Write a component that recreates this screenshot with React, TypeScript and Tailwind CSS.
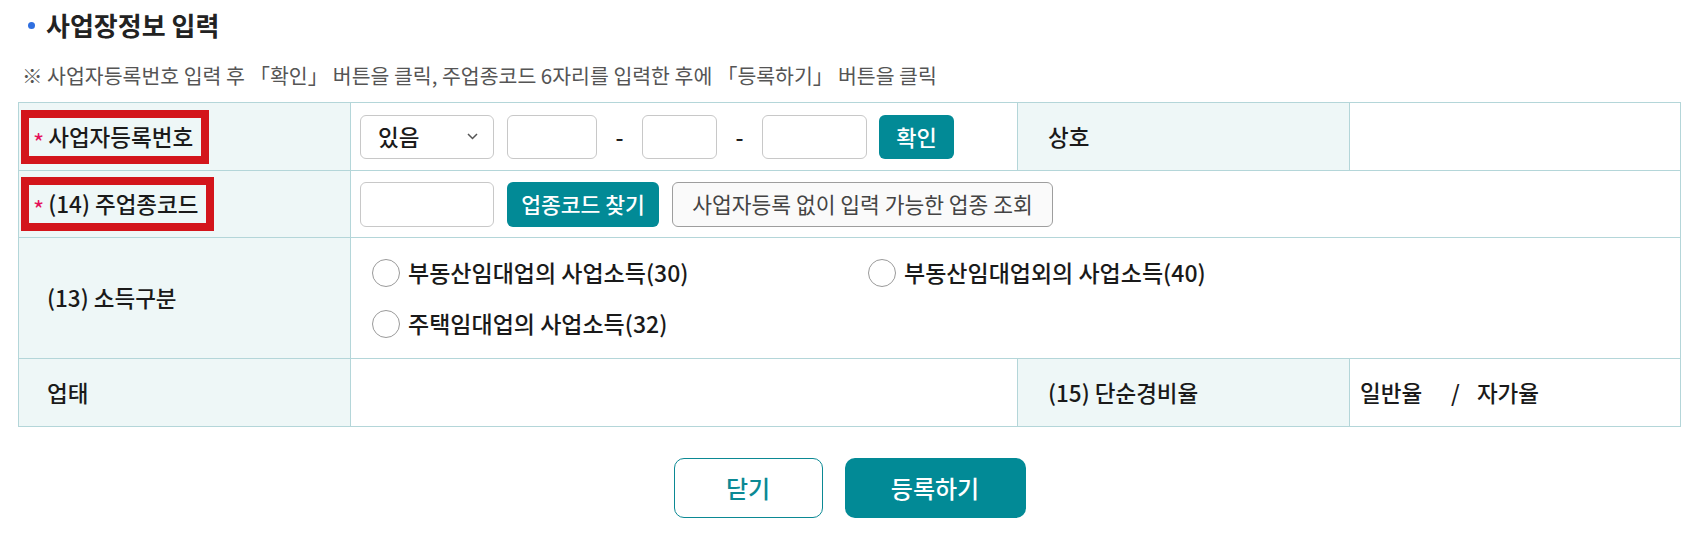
function RequiredLabel({ children }: { children: React.ReactNode }) {
  return (
    <div className="inline-flex h-[54px] items-center border-[8px] border-[#d3151b] pl-[4px] pr-[8px]">
      <span className="mr-[4px] translate-y-[5px] text-[24px] font-normal leading-none text-[#e5105a]">*</span>
      <span>{children}</span>
    </div>
  )
}

function Radio({ label }: { label: string }) {
  return (
    <label className="flex h-[40px] w-[496px] items-center gap-[8px]">
      <span className="h-[28px] w-[28px] shrink-0 rounded-full border border-[#9a9a9a] bg-white" />
      <span className="text-[23px]">{label}</span>
    </label>
  )
}

export default function App() {
  return (
    <div className="min-h-screen bg-white px-[18px] font-['Noto_Sans_CJK_KR','Noto_Sans',sans-serif] text-[#1a1a1a]">
      <div className="flex h-[50px] items-center pl-[10px]">
        <span className="mr-[11px] h-[7px] w-[7px] rounded-full bg-[#2f6fe0]" />
        <h2 className="text-[26px] font-bold leading-none text-[#222]">사업장정보 입력</h2>
      </div>
      <p className="mt-[10px] pl-[4px] text-[20.5px] leading-[30px] text-[#555]">
        ※ 사업자등록번호 입력 후 「확인」 버튼을 클릭, 주업종코드 6자리를 입력한 후에 「등록하기」 버튼을 클릭
      </p>

      <table className="mt-[12px] w-full table-fixed border-collapse text-[22.5px] font-medium">
        <colgroup>
          <col className="w-[332px]" />
          <col className="w-[667px]" />
          <col className="w-[332px]" />
          <col />
        </colgroup>
        <tbody>
          <tr className="h-[68px]">
            <td className="border border-[#b4d6d9] bg-[#eef7f7] pl-[2px]">
              <RequiredLabel>사업자등록번호</RequiredLabel>
            </td>
            <td className="border border-[#b4d6d9] pl-[9px]">
              <div className="flex items-center">
                <div className="flex h-[44px] w-[134px] items-center justify-between rounded-[6px] border border-[#c8c8c8] pl-[17px] pr-[15px]">
                  <span>있음</span>
                  <svg width="11" height="7" viewBox="0 0 11 7" fill="none">
                    <path d="M1 1l4.5 4.5L10 1" stroke="#555" strokeWidth="1.5" />
                  </svg>
                </div>
                <input className="ml-[13px] h-[44px] w-[90px] rounded-[6px] border border-[#c8c8c8]" />
                <span className="w-[45px] text-center">-</span>
                <input className="h-[44px] w-[75px] rounded-[6px] border border-[#c8c8c8]" />
                <span className="w-[45px] text-center">-</span>
                <input className="h-[44px] w-[105px] rounded-[6px] border border-[#c8c8c8]" />
                <button className="ml-[12px] h-[44px] w-[75px] rounded-[6px] bg-[#028a96] text-[22px] font-medium text-white">
                  확인
                </button>
              </div>
            </td>
            <td className="border border-[#b4d6d9] bg-[#eef7f7] pl-[30px]">상호</td>
            <td className="border border-[#b4d6d9]" />
          </tr>

          <tr className="h-[67px]">
            <td className="border border-[#b4d6d9] bg-[#eef7f7] pl-[2px]">
              <RequiredLabel>(14) 주업종코드</RequiredLabel>
            </td>
            <td colSpan={3} className="border border-[#b4d6d9] pl-[9px]">
              <div className="flex items-center">
                <input className="h-[45px] w-[134px] rounded-[6px] border border-[#c8c8c8]" />
                <button className="ml-[13px] h-[45px] w-[152px] rounded-[6px] bg-[#028a96] text-[21.5px] font-medium text-white">
                  업종코드 찾기
                </button>
                <button className="ml-[13px] h-[45px] w-[381px] rounded-[6px] border border-[#9e9e9e] bg-[#fafafa] text-[21.5px] font-normal text-[#444]">
                  사업자등록 없이 입력 가능한 업종 조회
                </button>
              </div>
            </td>
          </tr>

          <tr className="h-[121px]">
            <td className="border border-[#b4d6d9] bg-[#eef7f7] pl-[28px]">(13) 소득구분</td>
            <td colSpan={3} className="border border-[#b4d6d9] pl-[21px]">
              <div className="flex flex-wrap gap-y-[11px]">
                <Radio label="부동산임대업의 사업소득(30)" />
                <Radio label="부동산임대업외의 사업소득(40)" />
                <Radio label="주택임대업의 사업소득(32)" />
              </div>
            </td>
          </tr>

          <tr className="h-[68px]">
            <td className="border border-[#b4d6d9] bg-[#eef7f7] pl-[28px]">업태</td>
            <td className="border border-[#b4d6d9]" />
            <td className="border border-[#b4d6d9] bg-[#eef7f7] pl-[30px]">(15) 단순경비율</td>
            <td className="border border-[#b4d6d9] pl-[10px]">
              <span>일반율</span>
              <span className="ml-[29px] mr-[17px]">/</span>
              <span>자가율</span>
            </td>
          </tr>
        </tbody>
      </table>

      <div className="mt-[31px] flex justify-center gap-[22px]">
        <button className="h-[60px] w-[149px] rounded-[10px] border border-[#0b8994] bg-white text-[24px] font-medium text-[#0b8994]">
          닫기
        </button>
        <button className="h-[60px] w-[181px] rounded-[10px] bg-[#028a96] text-[24px] font-medium text-white">
          등록하기
        </button>
      </div>
    </div>
  )
}
